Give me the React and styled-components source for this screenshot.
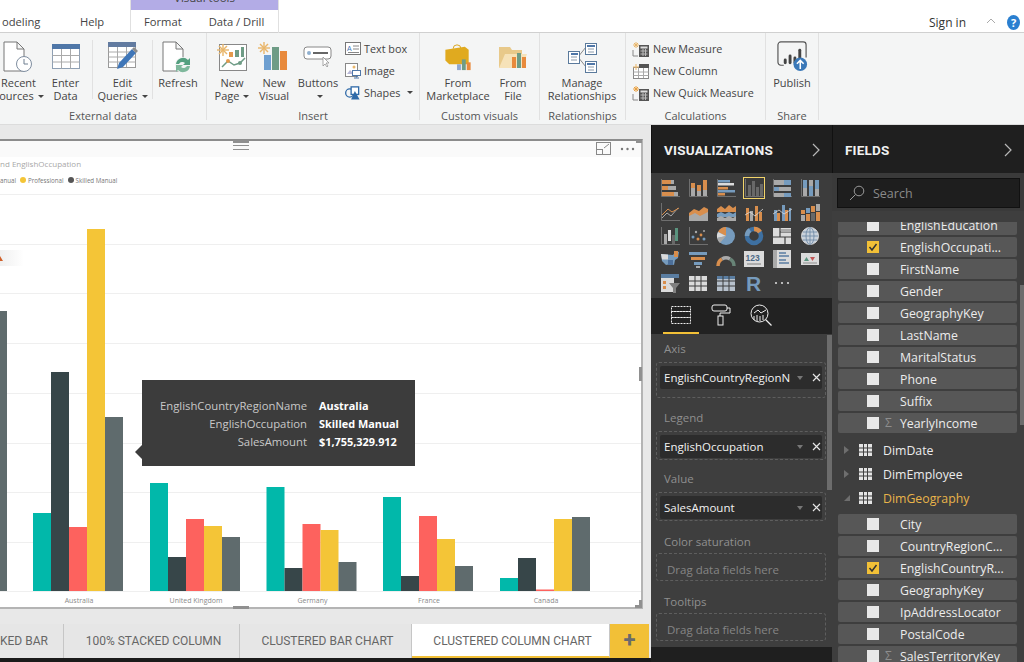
import React from "react";
import styled, { createGlobalStyle } from "styled-components";

const GlobalStyle = createGlobalStyle`
	html, body {
		margin: 0;
		padding: 0;
		background: #000;
	}
	* {
		box-sizing: border-box;
	}
`;

const UI = `"Open Sans", "Noto Sans", sans-serif`;

const Page = styled.div`
	width: 1024px;
	height: 662px;
	overflow: hidden;
	display: flex;
	flex-direction: column;
	font-family: ${UI};
	background: #fff;
`;

/* ---------- top tabs ---------- */

const TabRow = styled.div`
	height: 33px;
	flex: none;
	display: flex;
	background: #fff;
	color: #444;
	font-size: 11.2px;
	border-bottom: 1px solid #d0d0d0;
`;

const TopTab = styled.div`
	width: ${(p) => p.$w}px;
	padding: 14px 0 0 ${(p) => p.$pad || 0}px;
	white-space: nowrap;
`;

const ContextTab = styled.div`
	width: 149px;
	height: 33px;
	display: flex;
	flex-direction: column;
	border-left: 1px solid #e0e0e0;
	border-right: 1px solid #e0e0e0;
`;

const ContextBand = styled.div`
	height: 10px;
	background: #b3ace6;
	overflow: hidden;
	text-align: center;
	font-size: 11.5px;
	line-height: 10px;
	color: #444;

	& span {
		position: relative;
		top: -7px;
	}
`;

const ContextLabels = styled.div`
	display: flex;
	padding: 4px 0 0 13px;
	gap: 27px;
`;

const TabSpacer = styled.div`
	flex: 1;
`;

const SignIn = styled.div`
	padding-top: 14px;
	margin-right: 20px;
	font-size: 12px;
	color: #333;
`;

const Chevron = styled.svg`
	margin: 18px 11px 0 0;
`;

const HelpDot = styled.div`
	width: 13px;
	height: 15px;
	border-radius: 50%;
	margin: 15px 4px 0 0;
	background: #2a7fd0;
	color: #fff;
	font-size: 11px;
	font-weight: 700;
	line-height: 15px;
	text-align: center;
`;

/* ---------- ribbon ---------- */

const Ribbon = styled.div`
	height: 92px;
	flex: none;
	display: flex;
	background: #f4f5f5;
	border-bottom: 1px solid #dcdcdc;
`;

const Group = styled.div`
	width: ${(p) => p.$w}px;
	margin-left: ${(p) => p.$ml || 0}px;
	flex: none;
	display: flex;
	flex-direction: column;
	border-right: 1px solid #e1e1e1;
	margin-bottom: 4px;
`;

const GroupBody = styled.div`
	height: 76px;
	flex: none;
	display: flex;
	padding-left: ${(p) => p.$pl || 0}px;
`;

const GroupName = styled.div`
	font-size: 11px;
	line-height: 14px;
	text-align: center;
	color: #555;
	padding-left: ${(p) => p.$pl || 0}px;
`;

const RibbonButton = styled.div`
	width: ${(p) => p.$w}px;
	flex: none;
	margin: 7px 0 10px;
	padding-right: ${(p) => p.$pr || 0}px;
	display: flex;
	flex-direction: column;
	align-items: center;
	font-size: 11px;
	line-height: 13px;
	color: #444;
	text-align: center;
	white-space: nowrap;
	border-right: ${(p) => (p.$sep ? "1px solid #e1e1e1" : "none")};
`;

const IconBox = styled.div`
	height: 33px;
	min-height: 0;
	flex: none;
	margin-bottom: 3px;
	display: flex;
	align-items: center;
	justify-content: center;
`;

const Caret = styled.span`
	display: inline-block;
	width: 0;
	height: 0;
	margin-left: 4px;
	vertical-align: 2px;
	border-left: 3px solid transparent;
	border-right: 3px solid transparent;
	border-top: 3px solid #444;
`;

const SmallStack = styled.div`
	display: flex;
	flex-direction: column;
	margin-left: ${(p) => p.$ml || 0}px;
	padding-top: 6px;
	gap: 3px;
`;

const SmallButton = styled.div`
	height: 19px;
	display: flex;
	align-items: center;
	gap: 3px;
	font-size: 10.8px;
	color: #444;
	white-space: nowrap;
`;

/* ---------- work area ---------- */

const Body = styled.div`
	flex: 1;
	min-height: 0;
	display: flex;
	background: #000;
`;

const CanvasColumn = styled.div`
	width: 651px;
	flex: none;
	display: flex;
	flex-direction: column;
	background: #e8e8e8;
`;

const Report = styled.div`
	position: relative;
	width: 643px;
	height: 470px;
	flex: none;
	margin-top: 14px;
	background: #fff;
	border-top: 2px solid #8c8c8c;
	border-right: 2px solid #b4b4b4;
	border-bottom: 2px solid #b4b4b4;
`;

const ReportHead = styled.div`
	height: 16px;
	background: #fafafa;
`;

const ChartTitle = styled.div`
	font-size: 8px;
	line-height: 12px;
	margin-top: 1px;
	color: #a8a8a8;
	white-space: nowrap;
`;

const Legend = styled.div`
	display: flex;
	align-items: center;
	height: 12px;
	margin-top: 4px;
	font-size: 6.2px;
	color: #777;
	white-space: nowrap;
`;

const Swatch = styled.i`
	width: 6px;
	height: 6px;
	border-radius: 50%;
	margin: 0 2px 0 4px;
	background: ${(p) => p.$c};
`;

const Chart = styled.svg`
	display: block;
	margin-top: 5px;
`;

const Grip = styled.div`
	position: absolute;
	background: #909090;
	left: ${(p) => p.$x}px;
	top: ${(p) => p.$y}px;
	width: ${(p) => p.$w}px;
	height: ${(p) => p.$h}px;
`;

const HeadIcons = styled.div`
	position: absolute;
	right: 6px;
	top: 1px;
	display: flex;
	align-items: center;
	gap: 9px;
`;

const Tooltip = styled.div`
	position: absolute;
	left: 142px;
	top: 239px;
	width: 273px;
	height: 86px;
	padding: 17px 16px 0 0;
	background: #3c3c3c;
	display: grid;
	grid-template-columns: 165px auto;
	column-gap: 12px;
	align-content: start;
	font-size: 11.3px;
	line-height: 18px;

	&::before {
		content: "";
		position: absolute;
		left: -7px;
		top: 65px;
		border-top: 7px solid transparent;
		border-bottom: 7px solid transparent;
		border-right: 7px solid #3c3c3c;
	}
`;

const TipKey = styled.div`
	color: #c8c8c8;
	text-align: right;
	white-space: nowrap;
`;

const TipValue = styled.div`
	color: #fff;
	font-weight: 700;
	font-size: 10.9px;
	white-space: nowrap;
`;

const SheetBar = styled.div`
	display: flex;
	height: 34px;
	flex: none;
	margin-top: 15px;
	width: 649px;
	font-family: Roboto, sans-serif;
	font-size: 12px;
	color: #666;
`;

const Sheet = styled.div`
	width: ${(p) => p.$w}px;
	flex: none;
	overflow: hidden;
	white-space: nowrap;
	line-height: 35px;
	text-align: ${(p) => (p.$clip ? "right" : "center")};
	padding: 0 ${(p) => (p.$clip ? 22 : 0)}px 0 ${(p) => (p.$clip ? 0 : 4)}px;
	background: ${(p) => (p.$active ? "#fff" : "#e6e6e6")};
	border-right: 1px solid #c6c6c6;
	border-bottom: ${(p) => (p.$active ? "2px solid #f2c037" : "none")};
`;

const AddSheet = styled.div`
	flex: 1;
	background: #f2c037;
	color: #6a6a6a;
	font-size: 22px;
	font-weight: 700;
	line-height: 31px;
	text-align: center;
`;

const BottomLine = styled.div`
	height: 4px;
	flex: none;
	background: #1a1a1a;
`;

/* ---------- side panels ---------- */

const Panel = styled.div`
	width: ${(p) => p.$w}px;
	flex: none;
	display: flex;
	flex-direction: column;
	overflow: hidden;
	position: relative;
	background: #3e3e3e;
`;

const PanelHead = styled.div`
	height: 48px;
	flex: none;
	display: flex;
	align-items: center;
	justify-content: space-between;
	padding: 2px 12px 0 12px;
	background: #1f1f1f;
	color: #f0f0f0;
	font-family: Roboto, sans-serif;
	font-size: 13.5px;
	font-weight: 700;
	letter-spacing: 0.2px;
	border-left: 1px solid #111;
`;

const VisGrid = styled.div`
	height: 125px;
	flex: none;
	padding: 4px 0 0 8px;
	display: grid;
	grid-template-columns: repeat(6, 28px);
	grid-auto-rows: 23.8px;
	background: #3c3c3c;
`;

const VisCell = styled.div`
	width: 22px;
	height: 22px;
	display: flex;
	align-items: center;
	justify-content: center;
	border: 1.5px solid ${(p) => (p.$on ? "#f2d46a" : "transparent")};

	& svg {
		flex: none;
		opacity: 0.88;
	}
`;

const PaneTabs = styled.div`
	height: 36px;
	flex: none;
	display: flex;
	background: #222;
	padding-left: 12px;
`;

const PaneTab = styled.div`
	width: 36px;
	height: 36px;
	margin-right: ${(p) => p.$mr || 0}px;
	display: flex;
	align-items: center;
	justify-content: center;
	border-bottom: 2px solid ${(p) => (p.$on ? "#f2c037" : "transparent")};
`;

const Wells = styled.div`
	flex: 1;
	padding: 7px 0 0 5px;
	display: flex;
	flex-direction: column;
	font-size: 11.5px;
`;

const WellLabel = styled.div`
	height: 16px;
	line-height: 16px;
	padding-left: 8px;
	color: #8f8f8f;
	margin-top: ${(p) => p.$mt || 0}px;
`;

const Well = styled.div`
	width: 170px;
	height: ${(p) => p.$h}px;
	margin-top: ${(p) => p.$mt ?? 5}px;
	padding: 3px;
	border: 1px dashed #5e5e5e;
	border-radius: 3px;
	color: #858585;
	line-height: 25px;
	text-indent: ${(p) => (p.$empty ? 7 : 0)}px;
`;

const Chip = styled.div`
	height: 23px;
	display: flex;
	align-items: center;
	padding-left: 4px;
	background: #2c2c2c;
	border-radius: 2px;
	color: #f2f2f2;
	white-space: nowrap;
`;

const ChipName = styled.span`
	width: 128px;
	overflow: hidden;
`;

const ChipCaret = styled.span`
	width: 0;
	height: 0;
	margin-left: 5px;
	border-left: 3.5px solid transparent;
	border-right: 3.5px solid transparent;
	border-top: 4px solid #777;
`;

const ChipClose = styled.svg`
	margin-left: 9px;
`;

const PaneScroll = styled.div`
	position: absolute;
	background: #6c6c6c;
	right: 0;
	top: ${(p) => p.$top}px;
	width: ${(p) => p.$w}px;
	height: ${(p) => p.$h}px;
`;

const PaneFoot = styled.div`
	height: 15px;
	flex: none;
	background: #1f1f1f;
`;

const SearchStrip = styled.div`
	height: 38px;
	flex: none;
	padding: 5px 4px 3px 5px;
	background: #3a3a3a;
`;

const SearchBox = styled.div`
	height: 30px;
	display: flex;
	align-items: center;
	gap: 8px;
	padding-left: 11px;
	background: #1e1e1e;
	border: 1px solid #111;
	color: #8a8a8a;
	font-size: 12.5px;
`;

const FieldScroll = styled.div`
	flex: 1;
	min-height: 0;
	margin-top: 11px;
	overflow: hidden;
	padding-left: 6px;
`;

const FieldList = styled.div`
	margin-top: ${(p) => p.$mt || 0}px;
	display: flex;
	flex-direction: column;
	gap: 2px;
`;

const FieldRow = styled.div`
	width: 179px;
	height: 20px;
	flex: none;
	display: flex;
	align-items: center;
	padding-left: 29px;
	background: #575757;
	border-radius: 2px;
	color: #ececec;
	font-size: 12.3px;
	white-space: nowrap;
`;

const Check = styled.div`
	width: 12px;
	height: 12px;
	flex: none;
	display: flex;
	align-items: center;
	justify-content: center;
	background: ${(p) => (p.$on ? "#f2c037" : "#e8e8e8")};
`;

const Sigma = styled.span`
	width: 21px;
	flex: none;
	padding-left: 6px;
	color: #8e8e8e;
	font-size: 12px;
	line-height: 1;
`;

const NoSigma = styled.span`
	width: 21px;
	flex: none;
`;

const TableRow = styled.div`
	height: 24px;
	display: flex;
	align-items: center;
	padding-left: 5px;
	color: ${(p) => (p.$open ? "#e9b44a" : "#ececec")};
	font-size: 12.3px;
`;

const Tri = styled.svg`
	width: 8px;
	margin-right: 8px;
`;

const TableGlyph = styled.svg`
	margin-right: 11px;
`;

const TableSet = styled.div`
	margin: 5px 0 4px;
`;

/* ---------- ribbon icons ---------- */

const DocPath = ({ stroke = "#777" }) => (
	<path d="M2 1h13l7 7v22H2z M15 1v7h7" fill="#fff" stroke={stroke} />
);

const GridLines = ({ x, y, w, h, cols, rows, c = "#aaa" }) => {
	const out = [];
	for (let i = 1; i < cols; i++) {
		const px = x + (w * i) / cols;
		out.push(<line key={"c" + i} x1={px} x2={px} y1={y} y2={y + h} stroke={c} />);
	}
	for (let i = 1; i < rows; i++) {
		const py = y + (h * i) / rows;
		out.push(<line key={"r" + i} x1={x} x2={x + w} y1={py} y2={py} stroke={c} />);
	}
	return out;
};

const RecentIcon = () => (
	<svg width="34" height="32" viewBox="0 0 34 32">
		<DocPath />
		<circle cx="22" cy="23" r="7.5" fill="#fff" stroke="#7f8ea0" />
		<path d="M22 18v5h4" fill="none" stroke="#6f7f90" />
	</svg>
);

const EnterDataIcon = () => (
	<svg width="30" height="28" viewBox="0 0 30 28">
		<rect x="1.5" y="1.5" width="27" height="24" fill="#fff" stroke="#8fa0b4" />
		<rect x="1" y="1" width="28" height="5" fill="#4f77a8" />
		<GridLines x={1.5} y={6} w={27} h={19.5} cols={3} rows={3} />
	</svg>
);

const EditQueriesIcon = () => (
	<svg width="32" height="32" viewBox="0 0 32 32">
		<rect x="1.5" y="1.5" width="27" height="25" fill="#fff" stroke="#999" />
		<rect x="1" y="1" width="28" height="5" fill="#627ba0" />
		<GridLines x={1.5} y={6} w={27} h={20} cols={3} rows={4} />
		<path d="M10 28l2-6 13-14 4 4-13 14z" fill="#3f76b8" />
		<path d="M25 8l2-2 4 4-2 2z" fill="#8c8c8c" />
	</svg>
);

const RefreshIcon = () => (
	<svg width="34" height="32" viewBox="0 0 34 32">
		<DocPath />
		<circle cx="22" cy="24" r="8" fill="#f4f5f5" />
		<path d="M15 23a7 7 0 0 1 12-4l2-2v7h-7l2-2a4 4 0 0 0-6 1z" fill="#55a080" />
		<path d="M29 25a7 7 0 0 1-12 4l-2 2v-7h7l-2 2a4 4 0 0 0 6-1z" fill="#7fb89c" />
	</svg>
);

const Burst = ({ x, y }) => (
	<g stroke="#e9b66a" strokeWidth="1.4">
		<line x1={x - 6} x2={x + 6} y1={y} y2={y} />
		<line x1={x} x2={x} y1={y - 6} y2={y + 6} />
		<line x1={x - 4} x2={x + 4} y1={y - 4} y2={y + 4} />
		<line x1={x - 4} x2={x + 4} y1={y + 4} y2={y - 4} />
	</g>
);

const NewPageIcon = () => (
	<svg width="32" height="30" viewBox="0 0 32 30">
		<rect x="3.5" y="2.5" width="27" height="26" fill="#fff" stroke="#888" />
		<rect x="13" y="10" width="4" height="5" fill="#e39a4d" />
		<rect x="19" y="8" width="4" height="7" fill="#6e9c86" />
		<rect x="25" y="5" width="3" height="10" fill="#6e9c86" />
		<path d="M6 25l6-6 6 4 6-2 5-5" fill="none" stroke="#6e9c86" strokeWidth="1.5" />
		<circle cx="12" cy="19" r="2" fill="#e39a4d" />
		<circle cx="24" cy="21" r="2" fill="#6e9c86" />
		<Burst x={7} y={8} />
	</svg>
);

const NewVisualIcon = () => (
	<svg width="32" height="30" viewBox="0 0 32 30">
		<rect x="6" y="13" width="7" height="15" fill="#6e9fd0" />
		<rect x="14" y="5" width="7" height="23" fill="#6e9c86" />
		<rect x="22" y="9" width="7" height="19" fill="#e88a3c" />
		<Burst x={6} y={6} />
	</svg>
);

const ButtonsIcon = () => (
	<svg width="30" height="24" viewBox="0 0 30 24">
		<rect x="1" y="2" width="27" height="12" rx="3" fill="#fff" stroke="#888" />
		<circle cx="6" cy="8" r="2" fill="#8fb0d0" />
		<rect x="10" y="7" width="15" height="2" fill="#666" />
		<path d="M20 12l0 9 2-2 2 3 1-1-2-3 3 0z" fill="#fff" stroke="#888" strokeWidth=".7" />
	</svg>
);

const TextBoxIcon = () => (
	<svg width="16" height="14" viewBox="0 0 16 14">
		<rect x=".5" y=".5" width="15" height="12" fill="#fff" stroke="#777" />
		<text x="2" y="9" fontSize="7" fontFamily="Liberation Sans, sans-serif" fill="#3f76b8">A</text>
		<path d="M8 4h6M8 7h6M3 10.500h11" stroke="#888" />
	</svg>
);

const ImageIcon = () => (
	<svg width="16" height="16" viewBox="0 0 16 16">
		<rect x=".5" y=".5" width="12" height="13" fill="#fff" stroke="#888" />
		<path d="M2 11l3-4 4 4z" fill="#b8b8d8" />
		<circle cx="9" cy="4" r="1.500" fill="#e9b66a" />
		<rect x="7.500" y="7.500" width="8" height="5" fill="#fff" stroke="#4f77a8" />
		<path d="M9 15h5M11.500 12.500v2" stroke="#4f77a8" />
	</svg>
);

const ShapesIcon = () => (
	<svg width="16" height="16" viewBox="0 0 17 16">
		<circle cx="5" cy="8" r="4.300" fill="none" stroke="#2f6aa8" strokeWidth="1.400" />
		<rect x="6.500" y="1.500" width="8" height="8" fill="#fff" stroke="#2f6aa8" strokeWidth="1.400" />
		<path d="M10.500 6l5 9h-9z" fill="#2f6aa8" />
	</svg>
);

const MarketIcon = () => (
	<svg width="30" height="33" viewBox="0 0 30 34">
		<path d="M10 9a4 4 0 0 1 8 0" fill="none" stroke="#d9a520" />
		<path d="M2 10l20-3 4 3v15H6l-4-4z" fill="#e0aa1f" />
		<rect x="14" y="25" width="4" height="6" fill="#8fa8d0" />
		<rect x="19" y="20" width="4" height="11" fill="#6e9c86" />
		<rect x="24" y="23" width="4" height="8" fill="#e88a3c" />
	</svg>
);

const FileIcon = () => (
	<svg width="30" height="30" viewBox="0 0 30 30">
		<path d="M1 5h11l2 3h10v18H1z" fill="#e8c98a" />
		<path d="M1 26l6-14h22l-5 14z" fill="#f6e2b8" />
		<rect x="14" y="15" width="4" height="11" fill="#e88a3c" />
		<rect x="19" y="11" width="4" height="15" fill="#6e9c86" />
		<rect x="24" y="15" width="4" height="11" fill="#e88a3c" />
	</svg>
);

const RelationsIcon = () => (
	<svg width="32" height="32" viewBox="0 0 32 32">
		<path d="M12 16L20 6M12 16l8 10" stroke="#8a8a8a" fill="none" />
		<g fill="#fff" stroke="#5a7a9c">
			<rect x="19.500" y="2.500" width="11" height="11" />
			<rect x="2.500" y="10.500" width="11" height="12" />
			<rect x="19.500" y="20.500" width="11" height="11" />
		</g>
		<path d="M21 5h8M5 13h7M21 23h8" stroke="#4f77a8" strokeWidth="2" />
		<path d="M22 8h6M22 11h6M5 16h6M5 19h6M22 26h6M22 29h6" stroke="#8a9aaa" />
	</svg>
);

const CalcIcon = ({ star = "#e9b66a" }) => (
	<svg width="18" height="16" viewBox="0 0 18 16">
		<path d="M1 9v6h5" fill="none" stroke="#888" />
		<rect x="7" y="4" width="10" height="12" fill="#555" />
		<rect x="8.500" y="5.500" width="7" height="2" fill="#ddd" />
		<path d="M8.500 10h7M8.500 13h7M11 8v7M13.500 8v7" stroke="#bbb" />
		<path d="M4 1v6M1 4h6M2 2l4 4M6 2l-4 4" stroke={star} />
	</svg>
);

const ColumnIcon = () => (
	<svg width="18" height="16" viewBox="0 0 18 16">
		<rect x="1.500" y="4.500" width="15" height="11" fill="#fff" stroke="#888" />
		<rect x="7" y="1" width="10" height="4" fill="#555" />
		<path d="M1.500 9h15M1.500 12.500h15M6.500 5v10M11.500 5v10" stroke="#aaa" />
		<path d="M4 1v6M1 4h6" stroke="#e9b66a" />
	</svg>
);

const PublishIcon = () => (
	<svg width="33" height="33" viewBox="0 0 34 34">
		<path d="M8 26H5a3 3 0 0 1-3-3V5a3 3 0 0 1 3-3h23a3 3 0 0 1 3 3v13" fill="none" stroke="#555" strokeWidth="1.200" />
		<rect x="8" y="19" width="3" height="6" rx="1.500" fill="#444" />
		<rect x="13" y="15" width="3" height="10" rx="1.500" fill="#444" />
		<rect x="18" y="17" width="3" height="8" rx="1.500" fill="#444" />
		<rect x="23" y="9" width="3" height="14" rx="1.500" fill="#444" />
		<circle cx="25" cy="25" r="7" fill="#3a78b8" />
		<path d="M25 30v-9M21.500 24.500L25 21l3.500 3.500" fill="none" stroke="#fff" strokeWidth="1.600" />
	</svg>
);

/* ---------- visualization icons ---------- */

const O = "#ee9a50";
const B = "#7ea9cf";
const G = "#b9b9b9";
const W = "#f1f1f1";
const D = "#6f6f6f";

const Bars = ({ items }) =>
	items.map(([x, y, w, h, c], i) => <rect key={i} x={x} y={y} width={w} height={h} fill={c} />);

const Axis = () => <path d="M1.500 1v17.500H20" fill="none" stroke="#777" />;

const visIcons = [
	<><Axis /><Bars items={[[2, 2, 9, 4, O], [11, 2, 3, 4, G], [2, 8, 6, 4, O], [8, 8, 8, 4, G], [2, 14, 12, 4, O], [14, 14, 4, 4, G]]} /></>,
	<><Axis /><Bars items={[[3, 9, 4, 9, G], [3, 5, 4, 5, O], [9, 7, 4, 11, O], [9, 13, 4, 5, G], [15, 2, 4, 10, O], [15, 12, 4, 6, G]]} /></>,
	<><Axis /><Bars items={[[2, 2, 12, 2.500, B], [2, 5, 16, 2.500, W], [2, 9, 10, 2.500, O], [2, 12, 17, 2.500, B], [2, 15, 7, 2.500, O]]} /></>,
	<><Axis /><Bars items={[[4, 7, 3, 11, D], [8, 3, 3, 15, D], [12, 9, 3, 9, D], [16, 6, 3, 12, D]]} /></>,
	<><Axis /><Bars items={[[2, 2, 10, 5, G], [12, 2, 7, 5, B], [2, 9, 5, 4, B], [7, 9, 12, 4, G], [2, 15, 10, 4, G], [12, 15, 7, 4, B]]} /></>,
	<><Axis /><Bars items={[[3, 2, 4, 8, B], [3, 10, 4, 8, G], [9, 2, 4, 6, G], [9, 8, 4, 10, B], [15, 2, 4, 9, B], [15, 11, 4, 7, G]]} /></>,
	<><Axis /><path d="M2 16l5-5 4 3 7-8" fill="none" stroke={G} /><path d="M2 13l6-6 4 3 7-4" fill="none" stroke={O} /></>,
	<><path d="M1 11l5-4 5 2 5-4 4 2v12H1z" fill={O} /><path d="M1 14l6-3 5 3 8-4v9H1z" fill={G} /></>,
	<><path d="M1 7l4-3 4 3 4-4 4 3 3-2v6H1z" fill={O} /><path d="M1 12l4-2 4 2 4-2 4 2 3-2v5H1z" fill={B} /><path d="M1 16l4-2 4 2 4-2 4 2 3-2v5H1z" fill={G} /></>,
	<><Bars items={[[2, 6, 3, 13, O], [6, 9, 3, 10, G], [11, 4, 3, 15, O], [15, 10, 3, 9, O]]} /><path d="M1 13l5-3 5 4 8-7" fill="none" stroke={W} strokeWidth=".8" /></>,
	<><Bars items={[[2, 8, 3, 11, B], [5, 11, 3, 8, O], [10, 3, 3, 16, B], [13, 8, 3, 11, O], [17, 6, 2, 13, B]]} /><path d="M1 12l6-4 5 4 8-5" fill="none" stroke={W} strokeWidth=".8" /></>,
	<><Bars items={[[1, 8, 4, 4, O], [1, 13, 4, 6, G], [6, 6, 4, 5, B], [6, 12, 4, 7, O], [11, 4, 4, 6, O], [11, 11, 4, 8, D], [16, 2, 4, 7, G], [16, 10, 4, 9, O]]} /></>,
	<><Axis /><Bars items={[[4, 8, 3, 10, G], [8, 4, 3, 11, W], [12, 9, 3, 9, D], [15, 2, 3, 13, "#5f9f88"]]} /></>,
	<><Axis /><g fill={G}><circle cx="5" cy="11" r="1.500" fill={B} /><circle cx="8" cy="6" r="1.200" /><circle cx="10" cy="13" r="1.500" fill={O} /><circle cx="13" cy="9" r="1.400" fill={O} /><circle cx="16" cy="13" r="1.500" fill={B} /><circle cx="16" cy="5" r="1" /></g></>,
	<><circle cx="10" cy="10" r="9" fill={B} /><path d="M10 10V1a9 9 0 0 0-8 5z" fill={O} /><path d="M10 10L2 6a9 9 0 0 0-1 6z" fill={W} /><path d="M10 10l-9 2a9 9 0 0 0 3 5z" fill={G} /></>,
	<><circle cx="10" cy="10" r="7" fill="none" stroke="#3f78b0" strokeWidth="4.500" /><path d="M10 3a7 7 0 0 1 6 3" fill="none" stroke={O} strokeWidth="4.500" /><path d="M3 10a7 7 0 0 1 3-6" fill="none" stroke={B} strokeWidth="4.500" /></>,
	<><rect x="1" y="2" width="18" height="16" fill={W} /><path d="M8 2v9M1 11h18M13 11v7M8 6h11" stroke="#3c3c3c" strokeWidth="1.200" /><rect x="9" y="3" width="10" height="3" fill={G} /></>,
	<><circle cx="10" cy="10" r="8.500" fill="#dce6f2" stroke={W} /><path d="M10 1.500v17M1.500 10h17M3 6h14M3 14h14" stroke="#6f8fb0" strokeWidth=".8" fill="none" /><ellipse cx="10" cy="10" rx="4" ry="8.500" fill="none" stroke="#6f8fb0" strokeWidth=".8" /></>,
	<><path d="M1 5l12 1 3-4 3 1-1 6-3 2-1 5-3-1-5 1-4-4z" fill={B} /><path d="M1 5l7 .5v5H2z" fill={W} /><path d="M14 2h4v6h-4z" fill={O} /><path d="M8 11h5v5H8z" fill="#4f77a8" /></>,
	<><Bars items={[[1, 3, 18, 3, B], [3, 8, 14, 3, O], [6, 13, 8, 3, B], [8, 17, 4, 2, G]]} /></>,
	<><path d="M2 17a8 8 0 0 1 4-7" fill="none" stroke={O} strokeWidth="3.500" /><path d="M6 10a8 8 0 0 1 8 0" fill="none" stroke={G} strokeWidth="3.500" /><path d="M14 10a8 8 0 0 1 4 7" fill="none" stroke="#6f8f80" strokeWidth="3.500" /></>,
	<><rect x="0" y="2" width="20" height="16" fill={W} /><text x="1.500" y="12" fontSize="8.500" fontWeight="700" fontFamily="Liberation Sans, sans-serif" fill="#4f6f90">123</text><path d="M3 15h14" stroke="#888" /></>,
	<><rect x="1" y="1" width="18" height="18" fill={W} /><rect x="1" y="1" width="4" height="18" fill={G} /><path d="M7 4h7M7 7h10M7 11h7M7 14h10" stroke="#5f87b0" strokeWidth="1.400" /></>,
	<><rect x="1" y="4" width="18" height="12" fill={W} /><path d="M4 12l2.500-4 2.500 4z" fill="#5f9f88" /><path d="M10 8h5l-2.500 4z" fill="#d45a5a" /><path d="M3 14h14" stroke="#999" /></>,
	<><path d="M1 1h18v4H1z" fill="#5f87b0" /><rect x="1" y="5" width="13" height="14" fill={W} /><path d="M3 8h3v3H3zM3 13h3v3H3z" fill={O} /><path d="M9 10h11l-4 5v5h-3v-5z" fill="#8a8a8a" /></>,
	<><rect x="1" y="3" width="18" height="15" fill={W} /><GridLines x={1} y={3} w={18} h={15} cols={3} rows={3} c="#3c3c3c" /></>,
	<><rect x="1" y="3" width="18" height="15" fill="#c8d4e0" /><rect x="1" y="3" width="18" height="3" fill="#5f87b0" /><GridLines x={1} y={3} w={18} h={15} cols={3} rows={3} c="#3c3c3c" /></>,
];

/* ---------- data ---------- */

const TEAL = "#01b8aa";
const NAVY = "#374649";
const RED = "#fd625e";
const SLATE = "#5f6b6d";
const seriesColors = [TEAL, NAVY, RED, "#f4c537", SLATE];
const BASE = 591;

const clusters = [
	{ x: 33, tops: [513, 372, 527, 229, 417], label: "Australia" },
	{ x: 150, tops: [483, 557, 519, 526, 537], label: "United Kingdom" },
	{ x: 266.5, tops: [487, 568, 524, 530, 562], label: "Germany" },
	{ x: 383, tops: [497, 576, 516, 539, 566], label: "France" },
	{ x: 500, tops: [578, 558, 589.5, 519, 517], label: "Canada" },
];

const gridYs = [194, 244, 293, 343, 393, 443, 492, 542, 591];

const firstFields = [
	{ name: "EnglishEducation" },
	{ name: "EnglishOccupati...", on: true },
	{ name: "FirstName" },
	{ name: "Gender" },
	{ name: "GeographyKey" },
	{ name: "LastName" },
	{ name: "MaritalStatus" },
	{ name: "Phone" },
	{ name: "Suffix" },
	{ name: "YearlyIncome", sum: true },
];

const geoFields = [
	{ name: "City" },
	{ name: "CountryRegionC..." },
	{ name: "EnglishCountryR...", on: true },
	{ name: "GeographyKey" },
	{ name: "IpAddressLocator" },
	{ name: "PostalCode" },
	{ name: "SalesTerritoryKey", sum: true },
];

const Field = ({ name, on, sum }) => (
	<FieldRow>
		<Check $on={on}>
			{on && (
				<svg width="10" height="10" viewBox="0 0 10 10">
					<path d="M1.500 5l2.500 3 4.500-6" fill="none" stroke="#333" strokeWidth="1.500" />
				</svg>
			)}
		</Check>
		{sum ? <Sigma>Σ</Sigma> : <NoSigma />}
		{name}
	</FieldRow>
);

const TableEntry = ({ name, open }) => (
	<TableRow $open={open}>
		<Tri height="10" viewBox="0 0 8 10">
			{open ? <path d="M1 8l6-6v6z" fill="#6e6e6e" /> : <path d="M1 1l5 4-5 4z" fill="#6e6e6e" />}
		</Tri>
		<TableGlyph width="13" height="12" viewBox="0 0 13 12">
			<rect width="13" height="12" fill="#e4e4e4" />
			<path d="M4.500 0v12M8.500 0v12M0 4h13M0 8h13" stroke="#3e3e3e" />
		</TableGlyph>
		{name}
	</TableRow>
);

const Pill = ({ name }) => (
	<Chip>
		<ChipName>{name}</ChipName>
		<ChipCaret />
		<ChipClose width="9" height="9" viewBox="0 0 9 9">
			<path d="M1 1l7 7M8 1L1 8" stroke="#e6e6e6" strokeWidth="1.200" />
		</ChipClose>
	</Chip>
);

const PanelArrow = () => (
	<svg width="8" height="14" viewBox="0 0 8 14">
		<path d="M1 1l6 6-6 6" fill="none" stroke="#b8b8b8" strokeWidth="1.200" />
	</svg>
);

const App = () => {
	return (
		<Page>
			<GlobalStyle />
			<TabRow>
				<TopTab $w={80} $pad={2}>odeling</TopTab>
				<TopTab $w={50}>Help</TopTab>
				<ContextTab>
					<ContextBand>
						<span>Visual tools</span>
					</ContextBand>
					<ContextLabels>
						<span>Format</span>
						<span>Data / Drill</span>
					</ContextLabels>
				</ContextTab>
				<TabSpacer />
				<SignIn>Sign in</SignIn>
				<Chevron width="10" height="6" viewBox="0 0 10 6">
					<path d="M1 5l4-4 4 4" fill="none" stroke="#aaa" />
				</Chevron>
				<HelpDot>?</HelpDot>
			</TabRow>

			<Ribbon>
				<Group $w={219} $ml={-12}>
					<GroupBody>
						<RibbonButton $w={61}>
							<IconBox><RecentIcon /></IconBox>
							Recent
							<span>Sources<Caret /></span>
						</RibbonButton>
						<RibbonButton $w={44} $pr={10} $sep>
							<IconBox><EnterDataIcon /></IconBox>
							Enter
							<span>Data</span>
						</RibbonButton>
						<RibbonButton $w={60} $sep>
							<IconBox><EditQueriesIcon /></IconBox>
							Edit
							<span>Queries<Caret /></span>
						</RibbonButton>
						<RibbonButton $w={50}>
							<IconBox><RefreshIcon /></IconBox>
							Refresh
						</RibbonButton>
					</GroupBody>
					<GroupName $pl={12}>External data</GroupName>
				</Group>
				<Group $w={213}>
					<GroupBody $pl={4}>
						<RibbonButton $w={42}>
							<IconBox><NewPageIcon /></IconBox>
							New
							<span>Page<Caret /></span>
						</RibbonButton>
						<RibbonButton $w={42}>
							<IconBox><NewVisualIcon /></IconBox>
							New
							<span>Visual</span>
						</RibbonButton>
						<RibbonButton $w={46}>
							<IconBox><ButtonsIcon /></IconBox>
							Buttons
							<span><Caret /></span>
						</RibbonButton>
						<SmallStack $ml={4}>
							<SmallButton><TextBoxIcon /> Text box</SmallButton>
							<SmallButton><ImageIcon /> Image</SmallButton>
							<SmallButton><ShapesIcon /> Shapes<Caret /></SmallButton>
						</SmallStack>
					</GroupBody>
					<GroupName>Insert</GroupName>
				</Group>
				<Group $w={120}>
					<GroupBody $pl={4}>
						<RibbonButton $w={68}>
							<IconBox><MarketIcon /></IconBox>
							From
							<span>Marketplace</span>
						</RibbonButton>
						<RibbonButton $w={42}>
							<IconBox><FileIcon /></IconBox>
							From
							<span>File</span>
						</RibbonButton>
					</GroupBody>
					<GroupName>Custom visuals</GroupName>
				</Group>
				<Group $w={86}>
					<GroupBody>
						<RibbonButton $w={84}>
							<IconBox><RelationsIcon /></IconBox>
							Manage
							<span>Relationships</span>
						</RibbonButton>
					</GroupBody>
					<GroupName>Relationships</GroupName>
				</Group>
				<Group $w={140}>
					<GroupBody $pl={6}>
						<SmallStack>
							<SmallButton><CalcIcon /> New Measure</SmallButton>
							<SmallButton><ColumnIcon /> New Column</SmallButton>
							<SmallButton><CalcIcon star="#e9a040" /> New Quick Measure</SmallButton>
						</SmallStack>
					</GroupBody>
					<GroupName>Calculations</GroupName>
				</Group>
				<Group $w={53}>
					<GroupBody>
						<RibbonButton $w={52}>
							<IconBox><PublishIcon /></IconBox>
							Publish
						</RibbonButton>
					</GroupBody>
					<GroupName>Share</GroupName>
				</Group>
			</Ribbon>

			<Body>
				<CanvasColumn>
					<Report>
						<ReportHead />
						<ChartTitle>nd EnglishOccupation</ChartTitle>
						<Legend>
							anual <Swatch $c="#f4c537" /> Professional <Swatch $c="#555" /> Skilled Manual
						</Legend>
						<Chart width="641" height="417" viewBox="0 191 641 417">
							<defs>
								<linearGradient id="hintShade" x1="0" x2="1" y1="0" y2="0">
									<stop offset="0" stopColor="#f0f0f0" />
									<stop offset="1" stopColor="#fff" />
								</linearGradient>
							</defs>
							{gridYs.map((y) => (
								<line key={y} x1="0" x2="641" y1={y + 0.5} y2={y + 0.5} stroke="#efefef" />
							))}
							<rect x="0" y="250" width="24" height="16" fill="url(#hintShade)" />
							<rect x="0" y="311" width="7" height={BASE - 311} fill={SLATE} />
							{clusters.map((c) => (
								<g key={c.label}>
									{c.tops.map((top, i) => (
										<rect
											key={i}
											x={c.x + i * 18}
											y={top}
											width="18"
											height={BASE - top}
											fill={seriesColors[i]}
										/>
									))}
									<text
										x={c.x + 46}
										y="603"
										textAnchor="middle"
										fontSize="7"
										fontFamily="Open Sans, sans-serif"
										fill="#8a8a8a"
									>
										{c.label}
									</text>
								</g>
							))}
							<path d="M0 256l3 5H0z" fill="#d0602a" />
						</Chart>
						<Grip $x={233} $y={-1} $w={16} $h={3} />
						<Grip $x={233} $y={4} $w={16} $h={1} />
						<Grip $x={233} $y={8} $w={16} $h={1} />
						<Grip $x={639} $y={226} $w={3} $h={14} />
						<Grip $x={233} $y={465} $w={16} $h={3} />
						<Grip $x={635} $y={464} $w={7} $h={3} />
						<Grip $x={639} $y={459} $w={3} $h={8} />
						<Grip $x={636} $y={-1} $w={6} $h={3} />
						<HeadIcons>
							<svg width="15" height="13" viewBox="0 0 15 13">
								<rect x=".5" y=".5" width="14" height="12" fill="none" stroke="#888" />
								<rect x=".5" y="7.500" width="6" height="5" fill="none" stroke="#888" />
								<path d="M8 6l5-4" stroke="#888" />
							</svg>
							<svg width="15" height="4" viewBox="0 0 15 4">
								<circle cx="2" cy="2" r="1.200" fill="#777" />
								<circle cx="7.500" cy="2" r="1.200" fill="#777" />
								<circle cx="13" cy="2" r="1.200" fill="#777" />
							</svg>
						</HeadIcons>
						<Tooltip>
							<TipKey>EnglishCountryRegionName</TipKey>
							<TipValue>Australia</TipValue>
							<TipKey>EnglishOccupation</TipKey>
							<TipValue>Skilled Manual</TipValue>
							<TipKey>SalesAmount</TipKey>
							<TipValue>$1,755,329.912</TipValue>
						</Tooltip>
					</Report>
					<SheetBar>
						<Sheet $w={64} $clip>KED BAR</Sheet>
						<Sheet $w={176}>100% STACKED COLUMN</Sheet>
						<Sheet $w={172}>CLUSTERED BAR CHART</Sheet>
						<Sheet $w={198} $active>CLUSTERED COLUMN CHART</Sheet>
						<AddSheet>+</AddSheet>
					</SheetBar>
					<BottomLine />
				</CanvasColumn>

				<Panel $w={181}>
					<PanelHead>
						VISUALIZATIONS
						<PanelArrow />
					</PanelHead>
					<VisGrid>
						{visIcons.map((icon, i) => (
							<VisCell key={i} $on={i === 3}>
								<svg width="20" height="20" viewBox="0 0 20 20">{icon}</svg>
							</VisCell>
						))}
						<VisCell>
							<svg width="20" height="22" viewBox="0 0 20 22">
								<text x="2" y="19" fontSize="21" fontWeight="700" fontFamily="Liberation Sans, sans-serif" fill="#7ea9cf">R</text>
							</svg>
						</VisCell>
						<VisCell>
							<svg width="16" height="4" viewBox="0 0 16 4">
								<circle cx="2" cy="2" r="1.100" fill="#eee" />
								<circle cx="8" cy="2" r="1.100" fill="#eee" />
								<circle cx="14" cy="2" r="1.100" fill="#eee" />
							</svg>
						</VisCell>
					</VisGrid>
					<PaneTabs>
						<PaneTab $on $mr={4}>
							<svg width="20" height="18" viewBox="0 0 20 18">
								<path d="M.5.5h19v5H.5zM.5 5.500h19v6H.5zM.5 11.500h19v6H.5z" fill="none" stroke="#eee" strokeDasharray="2 1" />
							</svg>
						</PaneTab>
						<PaneTab $mr={4}>
							<svg width="20" height="22" viewBox="0 0 20 22">
								<rect x="1" y="1" width="15" height="6" rx="2" fill="none" stroke="#eee" />
								<path d="M16 4h3v5H9v3" fill="none" stroke="#eee" />
								<rect x="7" y="12" width="5" height="9" fill="none" stroke="#eee" />
							</svg>
						</PaneTab>
						<PaneTab>
							<svg width="22" height="22" viewBox="0 0 22 22">
								<circle cx="9.500" cy="9.500" r="8.500" fill="none" stroke="#eee" />
								<path d="M15.500 15.500l6 6" stroke="#eee" strokeWidth="1.300" />
								<path d="M4 9l4-3 3 3 5-3" fill="none" stroke="#eee" />
								<path d="M4 12v4M7 11v6M10 12v5M13 11v5" stroke="#eee" />
							</svg>
						</PaneTab>
					</PaneTabs>
					<Wells>
						<WellLabel>Axis</WellLabel>
						<Well $h={36}><Pill name="EnglishCountryRegionN" /></Well>
						<WellLabel $mt={12}>Legend</WellLabel>
						<Well $h={29} $mt={5}><Pill name="EnglishOccupation" /></Well>
						<WellLabel $mt={11}>Value</WellLabel>
						<Well $h={29} $mt={5}><Pill name="SalesAmount" /></Well>
						<WellLabel $mt={13}>Color saturation</WellLabel>
						<Well $h={28} $mt={3} $empty>Drag data fields here</Well>
						<WellLabel $mt={13}>Tooltips</WellLabel>
						<Well $h={28} $mt={3} $empty>Drag data fields here</Well>
					</Wells>
					<PaneFoot />
					<PaneScroll $top={210} $w={5} $h={155} />
				</Panel>

				<Panel $w={192}>
					<PanelHead>
						FIELDS
						<PanelArrow />
					</PanelHead>
					<SearchStrip>
						<SearchBox>
							<svg width="16" height="16" viewBox="0 0 16 16">
								<circle cx="10" cy="6" r="4.800" fill="none" stroke="#9a9a9a" />
								<path d="M6.500 9.500L1 15" stroke="#9a9a9a" />
							</svg>
							Search
						</SearchBox>
					</SearchStrip>
					<FieldScroll>
						<FieldList $mt={-7}>
							{firstFields.map((f) => (
								<Field key={f.name} {...f} />
							))}
						</FieldList>
						<TableSet>
							<TableEntry name="DimDate" />
							<TableEntry name="DimEmployee" />
							<TableEntry name="DimGeography" open />
						</TableSet>
						<FieldList>
							{geoFields.map((f) => (
								<Field key={f.name} {...f} />
							))}
						</FieldList>
					</FieldScroll>
					<PaneScroll $top={160} $w={4} $h={140} />
				</Panel>
			</Body>
		</Page>
	);
};

export default App;
